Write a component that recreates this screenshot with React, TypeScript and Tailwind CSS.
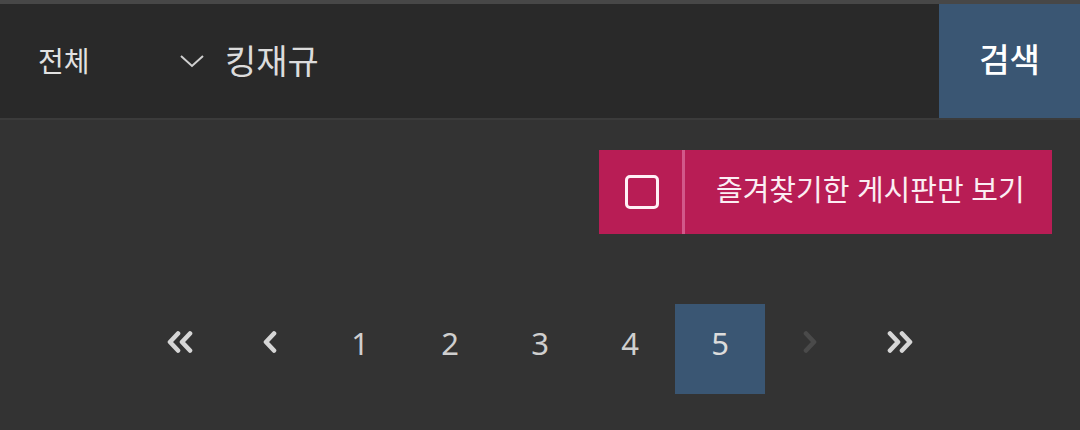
import React from 'react'

const FONT = { fontFamily: '"Noto Sans", "Noto Sans CJK KR", sans-serif' }

function Chev({ dir, double, className }: { dir: 'l' | 'r'; double?: boolean; className?: string }) {
  const w = double ? 28 : 16
  const paths = double
    ? dir === 'l'
      ? ['M12 2.5 L4 11 L12 19.5', 'M24 2.5 L16 11 L24 19.5']
      : ['M4 2.5 L12 11 L4 19.5', 'M16 2.5 L24 11 L16 19.5']
    : dir === 'l'
      ? ['M12 2.5 L4 11 L12 19.5']
      : ['M4 2.5 L12 11 L4 19.5']
  return (
    <svg width={w} height={22} viewBox={`0 0 ${w} 22`} className={className}>
      {paths.map((d) => (
        <path key={d} d={d} fill="none" stroke="currentColor" strokeWidth={4.6} strokeLinejoin="round" strokeLinecap="round" />
      ))}
    </svg>
  )
}

export default function App() {
  const pages = [1, 2, 3, 4, 5]
  const current = 5
  return (
    <div className="w-[1080px] h-[430px] bg-[#333333] overflow-hidden" style={FONT}>
      <div className="h-[4px] bg-[#474747]" />
      <div className="flex h-[116px] bg-[#292929] border-b-2 border-[#3b3b3b]">
        <div className="w-[150px] flex items-center pl-[38px] text-[28px] text-[#e2e2e2]">전체</div>
        <div className="flex-1 flex items-center">
          <svg width="26" height="16" viewBox="0 0 26 16" className="ml-[29px] text-[#d0d0d0]">
            <path d="M2 3 L13 13 L24 3" fill="none" stroke="currentColor" strokeWidth={2} />
          </svg>
          <span className="ml-[20px] text-[34px] text-[#dcdcdc]">킹재규</span>
        </div>
        <button className="w-[141px] h-[114px] bg-[#3a5673] text-[33px] font-medium text-white flex items-center justify-center pb-[2px]">
          검색
        </button>
      </div>

      <div className="flex justify-end pr-[28px] pt-[30px]">
        <div className="flex h-[84px] w-[453px] bg-[#b81d55]">
          <div className="w-[86px] flex items-center justify-center border-r-[3px] border-[#d2588a]">
            <div className="w-[34px] h-[34px] border-[3px] border-[#fff0f6] rounded-[5px] ml-[2px]" />
          </div>
          <div className="flex-1 flex items-center pl-[31px] pb-[4px] text-[29px] text-[#fbeef3]">
            즐겨찾기한 게시판만 보기
          </div>
        </div>
      </div>

      <div className="flex justify-center mt-[70px]">
        <div className="w-[90px] h-[90px] flex items-center justify-center pb-[14px] text-[#d6d6d6]">
          <Chev dir="l" double />
        </div>
        <div className="w-[90px] h-[90px] flex items-center justify-center pb-[14px] text-[#d6d6d6]">
          <Chev dir="l" />
        </div>
        {pages.map((p) => (
          <div
            key={p}
            className={
              p === current
                ? 'w-[90px] h-[90px] flex items-center justify-center pb-[12px] text-[31px] text-[#dcdcdc] bg-[#3a5673]'
                : 'w-[90px] h-[90px] flex items-center justify-center pb-[12px] text-[31px] text-[#cfcfcf]'
            }
          >
            {p}
          </div>
        ))}
        <div className="w-[90px] h-[90px] flex items-center justify-center pb-[14px] text-[#4a4a4a]">
          <Chev dir="r" />
        </div>
        <div className="w-[90px] h-[90px] flex items-center justify-center pb-[14px] text-[#d6d6d6]">
          <Chev dir="r" double />
        </div>
      </div>
    </div>
  )
}
